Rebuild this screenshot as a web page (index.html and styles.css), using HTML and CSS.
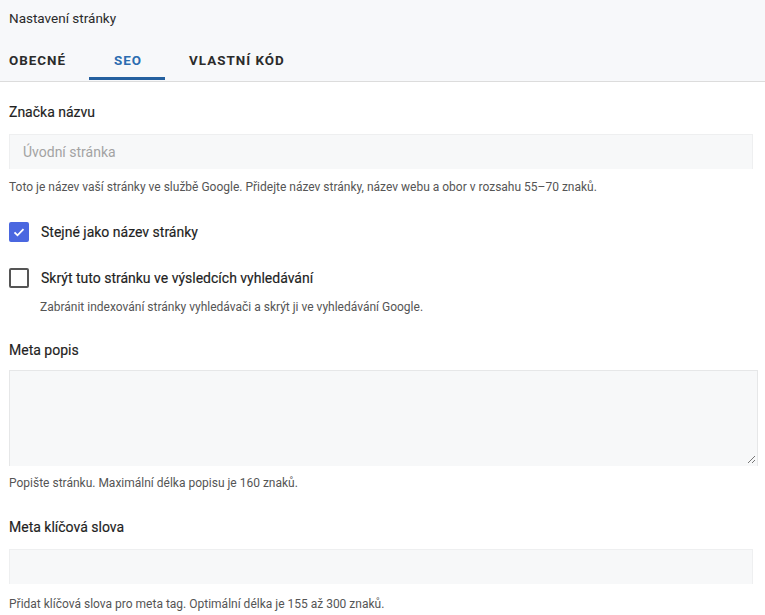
FILE: index.html
```html
<!DOCTYPE html>
<html lang="cs">
<head>
<meta charset="utf-8">
<link rel="stylesheet" href="styles.css">
</head>
<body>
<header class="head">
  <div class="title">Nastavení stránky</div>
  <nav class="tabs">
    <div class="tab">OBECNÉ</div>
    <div class="tab active">SEO</div>
    <div class="tab">VLASTNÍ KÓD</div>
  </nav>
</header>
<main class="content">
  <div class="label l1">Značka názvu</div>
  <div class="input"><span class="ph">Úvodní stránka</span></div>
  <div class="help h1">Toto je název vaší stránky ve službě Google. Přidejte název stránky, název webu a obor v rozsahu 55–70 znaků.</div>

  <div class="check c1">
    <span class="box checked"><svg width="14" height="14" viewBox="0 0 14 14"><path d="M2.5 7.3l3 3 6-6.2" fill="none" stroke="#fff" stroke-width="1.8"/></svg></span>
    <span class="ctext">Stejné jako název stránky</span>
  </div>
  <div class="check c2">
    <span class="box"></span>
    <span class="ctext">Skrýt tuto stránku ve výsledcích vyhledávání</span>
  </div>
  <div class="help indent">Zabránit indexování stránky vyhledávači a skrýt ji ve vyhledávání Google.</div>

  <div class="label l2">Meta popis</div>
  <div class="textarea"><svg class="grip" width="10" height="10" viewBox="0 0 10 10"><path d="M9 2L2 9M9 6L6 9" stroke="#777" stroke-width="1"/></svg></div>
  <div class="help h3">Popište stránku. Maximální délka popisu je 160 znaků.</div>

  <div class="label l3">Meta klíčová slova</div>
  <div class="input"></div>
  <div class="help h4">Přidat klíčová slova pro meta tag. Optimální délka je 155 až 300 znaků.</div>
</main>
</body>
</html>
```
FILE: styles.css
```css
* { box-sizing: border-box; }
html, body { margin: 0; padding: 0; }
body {
  background: #fff;
  font-family: Roboto, "Noto Sans", sans-serif;
  color: #222;
  width: 765px;
  overflow: hidden;
}
.head {
  background: #f7f8fa;
  border-bottom: 1px solid #dcdcdc;
  height: 82px;
}
.title {
  font-size: 13.5px;
  color: #2a2a2a;
  padding: 9px 0 0 9px;
  line-height: 18px;
}
.tabs {
  display: flex;
  margin-top: 24px;
}
.tab {
  font-size: 13.4px;
  font-weight: 700;
  letter-spacing: 1px;
  color: #2b2b2b;
  line-height: 20px;
  padding: 0 0 9px;
}
.tab:first-child { margin-left: 9px; margin-right: 23px; }
.tab.active {
  color: #2b6cb0;
  border-bottom: 3px solid #25609f;
  padding: 0 23px 6px 25px;
  margin-right: 24px;
}
.content {
  padding: 0 8px 0 9px;
}
.label {
  font-size: 14px;
  font-weight: 400;
  -webkit-text-stroke: 0.15px #222;
  color: #222;
  line-height: 18px;
}
.l1 { margin-top: 21px; }
.input {
  margin-top: 13px;
  height: 35px;
  width: 744px;
  background: #f7f8f9;
  border: 1px solid #eeeff0;
  border-bottom: none;
  padding: 0 13px;
  display: flex;
  align-items: center;
}
.ph { font-size: 14px; color: #a3a3a3; }
.help {
  font-size: 12px;
  color: #555;
  line-height: 16px;
  margin-top: 10px;
}
.check {
  display: flex;
  align-items: center;
  gap: 12px;
}
.c1 { margin-top: 27px; }
.c2 { margin-top: 26px; }
.box {
  width: 20px;
  height: 20px;
  border: 2px solid #555;
  border-radius: 2px;
  display: flex;
  align-items: center;
  justify-content: center;
}
.box.checked {
  background: #4a67e0;
  border-color: #4a67e0;
}
.ctext {
  font-size: 14px;
  font-weight: 400;
  -webkit-text-stroke: 0.15px #222;
  color: #222;
  line-height: 18px;
}
.indent { padding-left: 31px; margin-top: 11px; }
.l2 { margin-top: 26px; }
.textarea {
  margin-top: 11px;
  height: 96px;
  width: 749px;
  background: #f7f8f9;
  border: 1px solid #e6e7e8;
  border-bottom: none;
  position: relative;
}
.grip { position: absolute; right: 1px; bottom: 2px; }
.h3 { margin-top: 9px; }
.l3 { margin-top: 27px; }
.h4 { margin-top: 12px; }
```
